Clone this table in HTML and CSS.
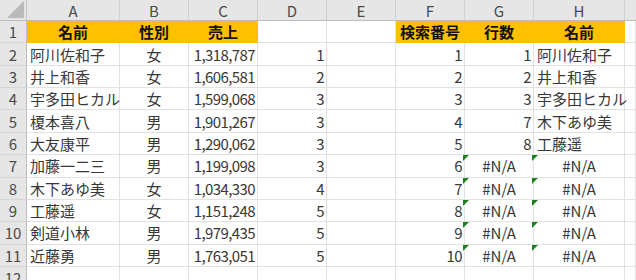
FILE: index.html
```html
<!DOCTYPE html>
<html lang="ja">
<head>
<meta charset="utf-8">
<title>Sheet</title>
<link rel="stylesheet" href="styles.css">
</head>
<body>
<div class="sheet">
  <div class="corner"><span class="tri"></span></div>
  <div class="ch">A</div><div class="ch">B</div><div class="ch">C</div><div class="ch">D</div><div class="ch">E</div><div class="ch">F</div><div class="ch">G</div><div class="ch">H</div><div class="ch last"></div>

  <div class="rh">1</div>
  <div class="c fill b ctr">名前</div><div class="c fill b ctr">性別</div><div class="c fill b ctr">売上</div><div class="c"></div><div class="c"></div><div class="c fill b ctr">検索番号</div><div class="c fill b ctr">行数</div><div class="c fill b ctr">名前</div><div class="c"></div>

  <div class="rh">2</div>
  <div class="c">阿川佐和子</div><div class="c ctr">女</div><div class="c num">1,318,787</div><div class="c num">1</div><div class="c"></div><div class="c num">1</div><div class="c num">1</div><div class="c">阿川佐和子</div><div class="c"></div>

  <div class="rh">3</div>
  <div class="c">井上和香</div><div class="c ctr">女</div><div class="c num">1,606,581</div><div class="c num">2</div><div class="c"></div><div class="c num">2</div><div class="c num">2</div><div class="c">井上和香</div><div class="c"></div>

  <div class="rh">4</div>
  <div class="c">宇多田ヒカル</div><div class="c ctr">女</div><div class="c num">1,599,068</div><div class="c num">3</div><div class="c"></div><div class="c num">3</div><div class="c num">3</div><div class="c">宇多田ヒカル</div><div class="c"></div>

  <div class="rh">5</div>
  <div class="c">榎本喜八</div><div class="c ctr">男</div><div class="c num">1,901,267</div><div class="c num">3</div><div class="c"></div><div class="c num">4</div><div class="c num">7</div><div class="c">木下あゆ美</div><div class="c"></div>

  <div class="rh">6</div>
  <div class="c">大友康平</div><div class="c ctr">男</div><div class="c num">1,290,062</div><div class="c num">3</div><div class="c"></div><div class="c num">5</div><div class="c num">8</div><div class="c">工藤遥</div><div class="c"></div>

  <div class="rh">7</div>
  <div class="c">加藤一二三</div><div class="c ctr">男</div><div class="c num">1,199,098</div><div class="c num">3</div><div class="c"></div><div class="c num">6</div><div class="c ctr err">#N/A</div><div class="c ctr err">#N/A</div><div class="c"></div>

  <div class="rh">8</div>
  <div class="c">木下あゆ美</div><div class="c ctr">女</div><div class="c num">1,034,330</div><div class="c num">4</div><div class="c"></div><div class="c num">7</div><div class="c ctr err">#N/A</div><div class="c ctr err">#N/A</div><div class="c"></div>

  <div class="rh">9</div>
  <div class="c">工藤遥</div><div class="c ctr">女</div><div class="c num">1,151,248</div><div class="c num">5</div><div class="c"></div><div class="c num">8</div><div class="c ctr err">#N/A</div><div class="c ctr err">#N/A</div><div class="c"></div>

  <div class="rh">10</div>
  <div class="c">剣道小林</div><div class="c ctr">男</div><div class="c num">1,979,435</div><div class="c num">5</div><div class="c"></div><div class="c num">9</div><div class="c ctr err">#N/A</div><div class="c ctr err">#N/A</div><div class="c"></div>

  <div class="rh">11</div>
  <div class="c">近藤勇</div><div class="c ctr">男</div><div class="c num">1,763,051</div><div class="c num">5</div><div class="c"></div><div class="c num">10</div><div class="c ctr err">#N/A</div><div class="c ctr err">#N/A</div><div class="c"></div>

  <div class="rh">12</div>
  <div class="c"></div><div class="c"></div><div class="c"></div><div class="c"></div><div class="c"></div><div class="c"></div><div class="c"></div><div class="c"></div><div class="c"></div>
</div>
</body>
</html>
```

FILE: styles.css
```css
html, body {
  margin: 0;
  padding: 0;
  background: #ffffff;
}

.sheet {
  display: grid;
  grid-template-columns: 27px 93px 69px 69px 69px 69px 69px 69px 91px 1fr;
  grid-template-rows: 21px repeat(12, 22.36px);
  width: 636px;
  height: 280px;
  overflow: hidden;
  font-family: "Noto Sans CJK JP", "Noto Sans", sans-serif;
  font-size: 15px;
  color: #383838;
}

.sheet > div {
  box-sizing: border-box;
  display: flex;
  align-items: center;
  white-space: nowrap;
  overflow: hidden;
}

.corner {
  background: #e6e6e6;
  border-right: 1px solid #c6c6c6;
  border-bottom: 1px solid #bdbdbd;
  position: relative;
}

.tri {
  position: absolute;
  right: 2px;
  bottom: 2px;
  width: 0;
  height: 0;
  border-left: 17px solid transparent;
  border-bottom: 17px solid #b9b9b9;
}

.ch {
  background: #e6e6e6;
  border-right: 1px solid #cfcfcf;
  border-bottom: 1px solid #bdbdbd;
  justify-content: center;
  color: #4a4a4a;
  font-size: 15px;
}

.ch.last {
  border-right: none;
}

.rh {
  background: #e6e6e6;
  border-right: 1px solid #bdbdbd;
  border-bottom: 1px solid #d6d6d6;
  justify-content: center;
  color: #4a4a4a;
  font-size: 15px;
}

.c {
  border-right: 1px solid #e1e1e1;
  border-bottom: 1px solid #e1e1e1;
  padding: 0 3px;
  position: relative;
  overflow: visible !important;
}

.fill {
  background: #ffc000;
  border-color: #ffc000;
  color: #111111;
}

.b {
  font-weight: 700;
}

.ctr {
  justify-content: center;
}

.num {
  justify-content: flex-end;
  padding-right: 2px;
  letter-spacing: -0.6px;
}

.err::before {
  content: "";
  position: absolute;
  left: -2px;
  top: 0;
  width: 0;
  height: 0;
  border-top: 6px solid #1f7f1f;
  border-right: 6px solid transparent;
}
```
